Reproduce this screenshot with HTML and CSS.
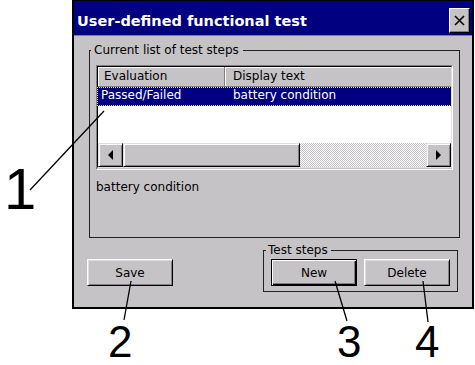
FILE: index.html
```
<!DOCTYPE html>
<html lang="en">
<head>
  <meta charset="UTF-8" />
  <title>User-defined functional test</title>
  <link rel="stylesheet" href="styles.css">
</head>
<body>

<div class="dialog">
  <div class="titlebar">
    <span class="title">User-defined functional test</span>
    <span class="close-btn">
      <svg width="11" height="11" viewBox="0 0 11 11"><path d="M1 1 L10 10 M10 1 L1 10" stroke="#000" stroke-width="1.6" fill="none"/></svg>
    </span>
  </div>

  <div class="dialog-body">
    <fieldset class="group group-list">
      <legend>Current list of test steps</legend>
      <div class="listview">
        <div class="lv-header">
          <span class="lv-col lv-col1">Evaluation</span>
          <span class="lv-col lv-col2">Display text</span>
        </div>
        <div class="lv-row selected">
          <span class="lv-cell lv-cell1">Passed/Failed</span>
          <span class="lv-cell lv-cell2">battery condition</span>
        </div>
        <div class="lv-fill"></div>
        <div class="hscroll">
          <span class="sb-btn"><i class="arrow arrow-left"></i></span>
          <span class="sb-thumb"></span>
          <span class="sb-track"></span>
          <span class="sb-btn"><i class="arrow arrow-right"></i></span>
        </div>
      </div>
      <div class="detail">battery condition</div>
    </fieldset>

    <div class="button-row">
      <button class="btn btn-save">Save</button>
      <fieldset class="group group-steps">
        <legend>Test steps</legend>
        <div class="steps-buttons">
          <button class="btn btn-default">New</button>
          <button class="btn">Delete</button>
        </div>
      </fieldset>
    </div>
  </div>
</div>

<!-- Leader lines for the callouts -->
<svg class="leaders" width="475" height="365" viewBox="0 0 475 365">
  <line x1="30" y1="190" x2="104" y2="111" />
  <line x1="124" y1="320" x2="131" y2="281" />
  <line x1="347" y1="321" x2="335" y2="281" />
  <line x1="428" y1="322" x2="423" y2="281" />
</svg>
<span class="callout c1">1</span>
<span class="callout c2">2</span>
<span class="callout c3">3</span>
<span class="callout c4">4</span>

</body>
</html>
```

FILE: styles.css
```
body {
  margin: 0;
  background-color: white;
  width: 475px;
  height: 365px;
  position: relative;
  overflow: hidden;
  font-family: "DejaVu Sans", Verdana, sans-serif;
  font-size: 12px;
  color: black;
}

.dialog {
  margin-left: 72px;
  width: 402px;
  height: 309px;
  box-sizing: border-box;
  border: 2px solid #000;
  border-top-width: 1px;
  background-color: #c6c3c6;
  display: flex;
  flex-direction: column;
}

.titlebar {
  height: 34px;
  background-color: #000080;
  border-bottom: 1px solid #808080;
  display: flex;
  justify-content: space-between;
  padding: 0 2px 0 3px;
}
.title {
  color: white;
  font-weight: bold;
  font-size: 14.5px;
  line-height: 18px;
  margin-top: 11px;
  white-space: nowrap;
}
.close-btn {
  width: 21px;
  height: 25px;
  margin-top: 7px;
  box-sizing: border-box;
  background-color: #c6c3c6;
  border: 1px solid;
  border-color: #fff #000 #000 #fff;
  box-shadow: inset -1px -1px #808080;
  display: flex;
  align-items: center;
  justify-content: center;
}

.dialog-body {
  flex: 1;
  padding-left: 15px;
}

.group {
  margin: 0;
  border: 1px solid #222;
  min-width: 0;
  box-sizing: border-box;
}
.group legend {
  line-height: 14px;
  padding: 0 4px 0 3px;
  margin-left: -5px;
  white-space: nowrap;
}

.group-list {
  margin-top: 7px;
  width: 371px;
  height: 195px;
  padding: 8px 6px 0 6px;
}

.listview {
  height: 105px;
  box-sizing: border-box;
  border: 1px solid;
  border-color: #808080 #fff #fff #808080;
  display: flex;
  flex-direction: column;
}
.listview > * {
  flex-shrink: 0;
}
.lv-header {
  display: flex;
  height: 21px;
  box-sizing: border-box;
  border-top: 1px solid #000;
  border-left: 1px solid #000;
  border-right: 1px solid #dfdfdf;
  background-color: #c6c3c6;
}
.lv-col {
  box-sizing: border-box;
  line-height: 19px;
  border-bottom: 1px solid #808080;
  border-right: 1px solid #808080;
  box-shadow: inset 1px 1px #fff;
  white-space: nowrap;
}
.lv-col1 {
  width: 127px;
  padding-left: 6px;
}
.lv-col2 {
  flex: 1;
  padding-left: 8px;
  border-right: none;
}

.lv-row {
  display: flex;
  height: 19px;
  box-sizing: border-box;
  border-left: 1px solid #000;
  border-right: 1px solid #dfdfdf;
  background-color: white;
  line-height: 17px;
  white-space: nowrap;
}
.lv-row.selected {
  background-color: #000080;
  color: white;
  outline: 1px dotted #e8e070;
  outline-offset: -1px;
}
.lv-cell1 {
  width: 126px;
  padding-left: 3px;
  box-sizing: border-box;
}
.lv-cell2 {
  padding-left: 9px;
}

.lv-fill {
  height: 37px;
  background-color: white;
  border-left: 1px solid #000;
  border-right: 1px solid #dfdfdf;
}

.hscroll {
  display: flex;
  height: 25px;
  box-sizing: border-box;
  border-left: 1px solid #000;
  border-right: 1px solid #dfdfdf;
  border-bottom: 1px solid #dfdfdf;
}
.sb-btn,
.sb-thumb {
  box-sizing: border-box;
  background-color: #c6c3c6;
  border: 1px solid;
  border-color: #dfdfdf #000 #000 #dfdfdf;
  box-shadow: inset 1px 1px #fff, inset -1px -1px #808080;
}
.sb-btn {
  width: 25px;
  display: flex;
  align-items: center;
  justify-content: center;
}
.sb-thumb {
  width: 177px;
}
.sb-track {
  flex: 1;
  background: repeating-conic-gradient(#c6c3c6 0 25%, #fff 0 50%) 0 0 / 2px 2px;
}
.arrow {
  width: 0;
  height: 0;
  border-top: 5px solid transparent;
  border-bottom: 5px solid transparent;
}
.arrow-left {
  border-right: 5px solid #000;
}
.arrow-right {
  border-left: 5px solid #000;
}

.detail {
  margin-top: 10px;
  line-height: 14px;
  padding-left: 0;
}

.button-row {
  display: flex;
  align-items: flex-start;
  margin-top: 5px;
}

.btn {
  font-family: inherit;
  font-size: 12px;
  color: black;
  width: 86px;
  height: 27px;
  padding: 0;
  margin: 0;
  background-color: #c6c3c6;
  border: 1px solid;
  border-color: #fff #000 #000 #fff;
  box-shadow: inset 1px 1px #dfdfdf, inset -1px -1px #808080;
}
.btn-save {
  margin-top: 16px;
  margin-left: -2px;
}
.btn-default {
  border: 1px solid #000;
  box-shadow: inset 1px 1px #fff, inset -1px -1px #000, inset -2px -2px #808080;
}

.group-steps {
  margin-left: 90px;
  width: 195px;
  height: 49px;
  padding: 2px 6px 5px 7px;
}
.group-steps legend {
  padding: 0 3px 0 2px;
}
.steps-buttons {
  display: flex;
  gap: 7px;
}

.leaders {
  position: absolute;
  top: 0;
  left: 0;
  pointer-events: none;
}
.leaders line {
  stroke: #000;
  stroke-width: 1.3;
}

.callout {
  position: absolute;
  font-family: "Liberation Sans", Arial, sans-serif;
  font-size: 44px;
  line-height: 44px;
  color: black;
}
.c1 {
  left: 4px;
  top: 160px;
  font-size: 58px;
  line-height: 58px;
}
.c2 {
  left: 108px;
  top: 320px;
}
.c3 {
  left: 337px;
  top: 320px;
}
.c4 {
  left: 415px;
  top: 320px;
}
```
